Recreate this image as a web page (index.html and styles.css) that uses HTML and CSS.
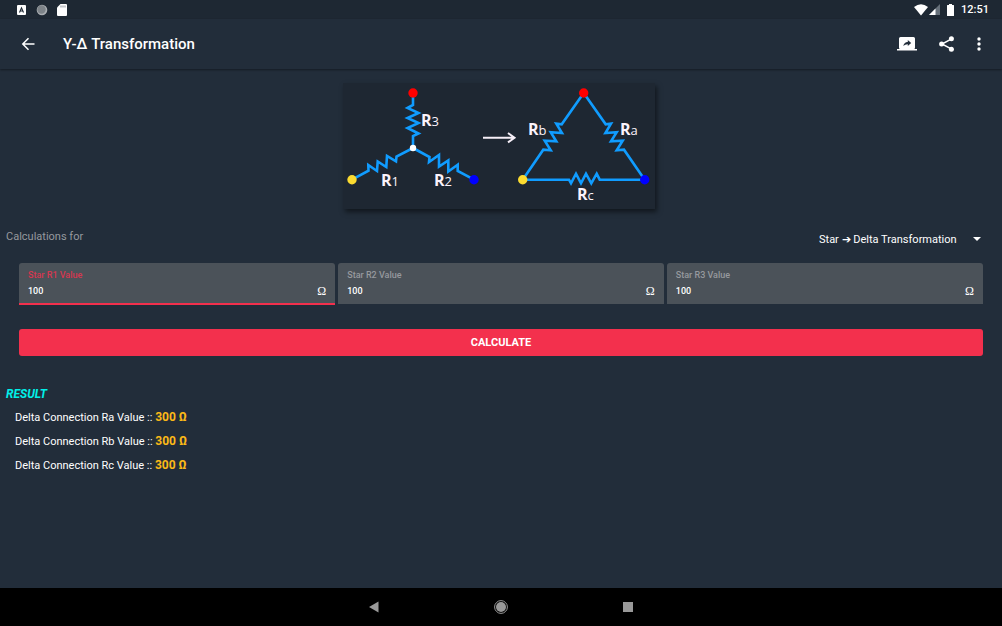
FILE: index.html
```
<!DOCTYPE html>
<html lang="en">
<head>
    <meta charset="utf-8">
    <meta name="viewport" content="width=device-width, initial-scale=1">
    <title>Y-Δ Transformation</title>
    <link rel="stylesheet" href="styles.css">
</head>
<body>
<div class="statusBar">
    <svg class="statusIcon" width="10" height="10" viewBox="0 0 10 10">
        <rect width="9" height="10" rx="1" fill="#fff"/>
        <path d="M2.5 7.5L4.5 2.8L6.5 7.5M3.2 6H5.8" fill="none" stroke="#1e2833" stroke-width="1.1"/>
    </svg>
    <svg class="statusIcon" width="12" height="12" viewBox="0 0 12 12">
        <circle cx="6" cy="6" r="5.3" fill="#a9adb1"/>
        <circle cx="5.5" cy="5.5" r="4.2" fill="#7d8388"/>
    </svg>
    <svg class="statusIcon" width="10" height="12" viewBox="0 0 10 12">
        <path d="M3.5 0H9Q10 0 10 1V11Q10 12 9 12H1Q0 12 0 11V3.5Z" fill="#fff"/>
        <path d="M4 1.5V3.5M6 1.5V3.5M8 1.5V3.5" stroke="#8b9198" stroke-width="1"/>
    </svg>
    <div class="statusRight">
        <svg width="14" height="12" viewBox="0 0 14 12"><path d="M0 3Q7 -2.5 14 3L7 11.5Z" fill="#fff"/></svg>
        <svg width="11" height="12" viewBox="0 0 11 12">
            <path d="M11 0V11H0Z" fill="#66707a"/>
            <path d="M6.5 4.5V11H0Z" fill="#fff"/>
        </svg>
        <svg class="battery" width="7" height="12" viewBox="0 0 7 12"><path d="M2 0H5V1H6.5Q7 1 7 1.5V11.5Q7 12 6.5 12H.5Q0 12 0 11.5V1.5Q0 1 .5 1H2Z" fill="#fff"/></svg>
        <span class="clock">12:51</span>
    </div>
</div>

<header class="appBar">
    <button class="iconButton" aria-label="Back">
        <svg width="14" height="14" viewBox="0 0 14 14"><path d="M13.5 7H2M7.5 1.2L1.8 7L7.5 12.8" fill="none" stroke="#fff" stroke-width="1.5"/></svg>
    </button>
    <h1 class="title">Y-Δ Transformation</h1>
    <div class="actions">
        <button class="iconButton" aria-label="Present">
            <svg width="20" height="14" viewBox="0 0 20 14">
                <path d="M3.5 0H16.5Q18 0 18 1.5V10.5Q18 12 17 12H20V13.5H0V12H3Q2 12 2 10.5V1.5Q2 0 3.5 0Z" fill="#fff"/>
                <path d="M6.3 9Q6.8 5.2 10.8 4.9V3L14.2 6L10.8 9V7.2Q8 7.1 6.3 9Z" fill="#222d3a"/>
            </svg>
        </button>
        <button class="iconButton" aria-label="Share">
            <svg width="16" height="16" viewBox="0 0 16 16">
                <path d="M12.6 2.8L3 8L12.6 13.2" fill="none" stroke="#fff" stroke-width="1.5"/>
                <circle cx="12.4" cy="2.8" r="2.5" fill="#fff"/>
                <circle cx="2.6" cy="8" r="2.5" fill="#fff"/>
                <circle cx="12.4" cy="13.2" r="2.5" fill="#fff"/>
            </svg>
        </button>
        <button class="iconButton" aria-label="More options">
            <svg width="4" height="14" viewBox="0 0 4 14" fill="#fff">
                <circle cx="2" cy="2" r="1.7"/>
                <circle cx="2" cy="7" r="1.7"/>
                <circle cx="2" cy="12" r="1.7"/>
            </svg>
        </button>
    </div>
</header>

<main class="content">
    <div class="diagramRow">
        <svg class="diagram" width="312" height="126" viewBox="0 0 312 126" role="img" aria-label="Star and delta resistor networks">
            <!-- star -->
            <g class="wire">
                <path d="M70 10V22L64.5 25L75.5 30L64.5 35L75.5 40L64.5 45L75.5 50.5L70 53V65"/>
                <path d="M9 96.7L25.5 87.7L25.3 82L34 88L34.7 78.5L43.3 84L44 73L53 78.3L53.5 73.5L70 65"/>
                <path d="M70 65L86.5 74L86 79L96 72L96 83.5L105.3 77.5L105.3 88.5L114.7 81.7L114.7 88L131 96.7"/>
            </g>
            <circle cx="70" cy="10" r="4.7" fill="#f00"/>
            <circle cx="70" cy="65" r="3.2" fill="#fff"/>
            <circle cx="9" cy="96.7" r="4.7" fill="#fbdb30"/>
            <circle cx="131" cy="96.7" r="4.7" fill="#00f"/>
            <text class="label" x="78" y="43">R<tspan class="sub">3</tspan></text>
            <text class="label" x="38" y="103">R<tspan class="sub">1</tspan></text>
            <text class="label" x="91" y="103">R<tspan class="sub">2</tspan></text>

            <path d="M140 54.7H171M165 50L171.5 54.7L165 59.4" fill="none" stroke="#f6eff8" stroke-width="2"/>

            <!-- delta -->
            <g class="wire">
                <path d="M240.7 10L218.7 41.3L213.3 40.7L219 50L207.7 49.3L213.3 58.3L201.7 57.7L207.7 67.3L200.3 66.7L179.7 96.7"/>
                <path d="M240.7 10L262.7 41.3L268 40.7L262.4 50L273.7 49.3L268 58.3L279.7 57.7L273.7 67.3L281 66.7L301.7 96.7"/>
                <path d="M179.7 96.7H226L228 100.3L233 90.7L238 100.3L243 90.7L248.3 100.3L253.7 90.7L256.7 96.7H301.7"/>
            </g>
            <circle cx="240.7" cy="10" r="4.7" fill="#f00"/>
            <circle cx="179.7" cy="96.7" r="4.7" fill="#fbdb30"/>
            <circle cx="301.7" cy="96.7" r="4.7" fill="#00f"/>
            <text class="label" x="185" y="52">R<tspan class="sub">b</tspan></text>
            <text class="label" x="277" y="52">R<tspan class="sub">a</tspan></text>
            <text class="label" x="234" y="117">R<tspan class="sub">c</tspan></text>
        </svg>
    </div>

    <div class="modeRow">
        <label class="modeLabel" for="mode">Calculations for</label>
        <div class="modeSelect">
            <select id="mode">
                <option>Star ➔ Delta Transformation</option>
            </select>
        </div>
    </div>

    <form class="calcForm" onsubmit="return false">
        <div class="fields">
            <div class="field active">
                <label for="r1">Star R1 Value</label>
                <div class="fieldRow"><input id="r1" type="text" value="100"><span class="unit">Ω</span></div>
            </div>
            <div class="field wide">
                <label for="r2">Star R2 Value</label>
                <div class="fieldRow"><input id="r2" type="text" value="100"><span class="unit">Ω</span></div>
            </div>
            <div class="field">
                <label for="r3">Star R3 Value</label>
                <div class="fieldRow"><input id="r3" type="text" value="100"><span class="unit">Ω</span></div>
            </div>
        </div>
        <button class="calculate" type="submit">CALCULATE</button>
    </form>

    <section class="result">
        <h2>RESULT</h2>
        <p>Delta Connection Ra Value :: <b>300 Ω</b></p>
        <p>Delta Connection Rb Value :: <b>300 Ω</b></p>
        <p>Delta Connection Rc Value :: <b>300 Ω</b></p>
    </section>
</main>

<nav class="navBar">
    <button class="iconButton" aria-label="Back">
        <svg width="14" height="14" viewBox="0 0 14 14"><path d="M2 7L11.5 1.5V12.5Z" fill="#999"/></svg>
    </button>
    <button class="iconButton" aria-label="Home">
        <svg width="14" height="14" viewBox="0 0 14 14">
            <circle cx="7" cy="7" r="6.4" fill="none" stroke="#999"/>
            <circle cx="7" cy="7" r="5" fill="#999"/>
        </svg>
    </button>
    <button class="iconButton" aria-label="Recent apps">
        <svg width="14" height="14" viewBox="0 0 14 14"><rect x="2" y="2" width="10" height="10" fill="#999"/></svg>
    </button>
</nav>
</body>
</html>
```
FILE: styles.css
```
* {
    box-sizing: border-box;
}
body {
    margin: 0;
    min-height: 100vh;
    display: flex;
    flex-direction: column;
    background-color: #222d3a;
    color: #fff;
    font-family: Roboto, "Liberation Sans", sans-serif;
    font-size: 11px;
}
svg {
    display: block;
}
button, input, select {
    font-family: inherit;
    color: inherit;
}
.statusBar {
    display: flex;
    align-items: center;
    gap: 9px;
    height: 19px;
    padding: 0 13px 0 17px;
    background-color: #1e2833;
}
.statusRight {
    display: flex;
    align-items: center;
    gap: 1px;
    margin-left: auto;
}
.battery {
    margin: 0 6px;
}
.clock {
    font-size: 11px;
    font-weight: 500;
}
.appBar {
    display: flex;
    align-items: center;
    height: 50px;
    padding: 0 21px;
    box-shadow: 0 1px 2px rgba(0,0,0,0.4);
}
.iconButton {
    padding: 0;
    border: 0;
    background: none;
}
.title {
    margin: 0 0 0 28px;
    font-size: 15px;
    font-weight: 500;
}
.actions {
    display: flex;
    align-items: center;
    gap: 22px;
    margin-left: auto;
}
.content {
    flex: 1;
    padding-top: 14px;
}
.diagramRow {
    display: flex;
    justify-content: center;
    padding-right: 4px;
}
.diagram {
    background-color: #1e2732;
    box-shadow: 2px 3px 5px rgba(0,0,0,0.5);
}
.wire {
    fill: none;
    stroke: #109cff;
    stroke-width: 2.6;
}
.label {
    fill: #fbf3fb;
    font-family: "Open Sans", "Noto Sans", sans-serif;
    font-size: 16px;
    font-weight: bold;
}
.sub {
    font-size: 13px;
    font-weight: normal;
}
.modeRow {
    display: flex;
    justify-content: space-between;
    margin-top: 20px;
    padding: 0 21px 0 6px;
}
.modeLabel {
    color: #96999e;
    line-height: 16px;
}
.modeSelect {
    display: flex;
    align-items: center;
}
.modeSelect::after {
    content: "";
    margin-left: -8px;
    border: 4px solid transparent;
    border-top-color: #fff;
    border-bottom: 0;
    pointer-events: none;
}
select {
    appearance: none;
    height: 20px;
    padding: 0 24px 0 0;
    border: 0;
    background: none;
    font-size: 11px;
}
.calcForm {
    padding: 0 19px;
}
.fields {
    display: flex;
    align-items: flex-start;
    gap: 3px;
    height: 42px;
    margin-top: 14px;
}
.field {
    flex: 32;
    height: 41px;
    padding: 5px 9px 0;
    border-radius: 3px 3px 0 0;
    background-color: #4b5259;
}
.wide {
    flex: 33;
}
.active {
    height: 42px;
    border-bottom: 2px solid #f3304d;
}
.field label {
    display: block;
    color: #96999e;
    font-size: 9px;
    font-weight: 500;
    line-height: 14px;
}
.active label {
    color: #d63750;
}
.fieldRow {
    display: flex;
    align-items: center;
    height: 18px;
}
.field input {
    flex: 1;
    min-width: 0;
    padding: 0;
    border: 0;
    outline: 0;
    background: none;
    font-size: 9px;
    font-weight: 500;
}
.unit {
    font-family: "Liberation Serif", serif;
    font-size: 12px;
}
.calculate {
    display: block;
    width: 100%;
    height: 27px;
    margin-top: 24px;
    padding: 0;
    border: 0;
    border-radius: 3px;
    background-color: #f3304d;
    font-size: 11px;
    font-weight: bold;
}
.result {
    padding: 31px 6px 0;
}
.result h2 {
    margin: 0 0 5px;
    color: #00f0e8;
    font-size: 12px;
    font-style: italic;
    line-height: 14px;
}
.result p {
    margin: 0;
    padding-left: 9px;
    line-height: 24px;
}
.result b {
    color: #fbb917;
    font-size: 12px;
    line-height: 14px;
}
.navBar {
    display: flex;
    justify-content: center;
    align-items: center;
    gap: 113px;
    height: 38px;
    background-color: #000;
}
```
